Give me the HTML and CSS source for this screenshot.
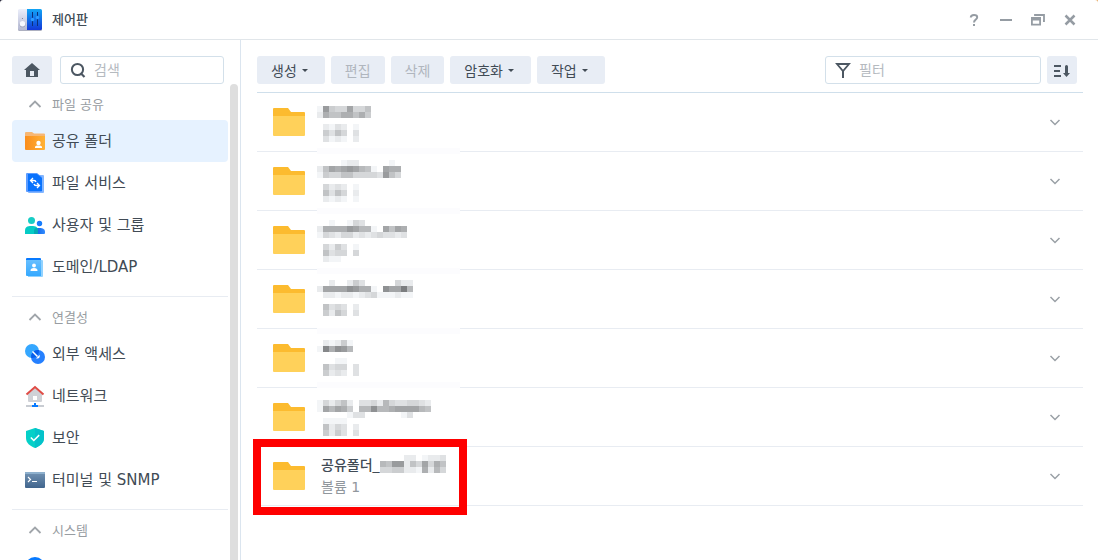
FILE: index.html
```html
<!DOCTYPE html>
<html lang="ko">
<head>
<meta charset="utf-8">
<meta name="viewport" content="width=device-width, initial-scale=1">
<title>제어판</title>
<link rel="stylesheet" href="styles.css">
</head>
<body>
<div class="window">
  <header class="titlebar">
    <svg class="app-icon" width="24" height="22" viewBox="0 0 24 22" aria-hidden="true">
      <defs>
        <linearGradient id="appBlue" x1="0" y1="0" x2="0" y2="1"><stop offset="0" stop-color="#12a5f5"/><stop offset="1" stop-color="#1238d8"/></linearGradient>
        <linearGradient id="appGray" x1="0" y1="0" x2="0" y2="1"><stop offset="0" stop-color="#eceffb"/><stop offset="1" stop-color="#b4b8d2"/></linearGradient>
      </defs>
      <rect y="1" width="24" height="21" rx="1.5" fill="#777b96" opacity=".6"/>
      <path d="M1.500 0H9v21H1.500A1.500 1.500 0 0 1 0 19.500V1.500A1.500 1.500 0 0 1 1.500 0Z" fill="url(#appGray)"/>
      <path d="M9 0h13.500A1.500 1.500 0 0 1 24 1.500v18a1.500 1.500 0 0 1-1.500 1.500H9Z" fill="url(#appBlue)"/>
      <circle cx="4.500" cy="15.500" r="3" fill="#9fa3bd"/><circle cx="4.500" cy="14.800" r="2.700" fill="#f7f8ff"/><circle cx="4.500" cy="9.500" r=".6" fill="#777b96"/>
      <path d="M14.500 3v14M19.500 3v14" stroke="#0b2f79" stroke-width="1"/>
      <circle cx="14.500" cy="10.500" r="1.700" fill="#2c9bff"/><circle cx="19.500" cy="8.500" r="1.700" fill="#2c9bff"/>
    </svg>
    <h1 class="title">제어판</h1>
    <div class="window-controls">
      <button class="control" aria-label="도움말"><svg width="16" height="16" viewBox="0 0 16 16"><path d="M4.800 5.500C4.800 3.500 6 3 8 3S11.200 3.700 11.200 5.200C11.200 7.500 8 7.400 8 10.500" fill="none" stroke="currentColor" stroke-width="2"/><rect x="7" y="12" width="2" height="2" fill="currentColor"/></svg></button>
      <button class="control" aria-label="최소화"><svg width="16" height="16" viewBox="0 0 16 16"><path d="M2 8h12" stroke="currentColor" stroke-width="2"/></svg></button>
      <button class="control" aria-label="이전 크기로"><svg width="16" height="16" viewBox="0 0 16 16"><path d="M5 4V3h9v6h-1" fill="none" stroke="currentColor" stroke-width="1.800"/><path fill-rule="evenodd" d="M1 5h10v8.500H1ZM2.800 8.500v3.200h6.400V8.500Z" fill="currentColor"/></svg></button>
      <button class="control" aria-label="닫기"><svg width="16" height="16" viewBox="0 0 16 16"><path d="M3.500 3.500l9 9M12.500 3.500l-9 9" stroke="currentColor" stroke-width="2.500"/></svg></button>
    </div>
  </header>

  <div class="body">
    <aside class="sidebar">
      <div class="sidebar-top">
        <button class="button home" aria-label="홈"><svg width="16" height="16" viewBox="0 0 16 16"><path fill-rule="evenodd" d="M8 1l8 7h-2v7H2V8H0ZM6 9v5h4V9Z" fill="#4c5762"/></svg></button>
        <label class="field">
          <svg width="16" height="16" viewBox="0 0 16 16" aria-hidden="true"><circle cx="7.500" cy="7.500" r="5.600" fill="none" stroke="#4c5762" stroke-width="2"/><path d="M10.500 11l4 4" stroke="#4c5762" stroke-width="2.200"/></svg>
          <input type="search" placeholder="검색" aria-label="검색">
        </label>
      </div>
      <div class="nav-area">
      <nav class="nav">
        <section class="group">
          <button class="group-title"><svg width="20" height="12" viewBox="0 0 20 12"><path d="M4.500 9L10 3.500 15.500 9" fill="none" stroke="#a0a5aa" stroke-width="1.800"/></svg><span class="label">파일 공유</span></button>
          <a class="item selected" href="#share" aria-current="page"><svg width="20" height="20" viewBox="0 0 20 20"><defs><linearGradient id="orange"><stop stop-color="#fa8d1d"/><stop offset="1" stop-color="#ffb236"/></linearGradient></defs><path d="M0 5V2a1 1 0 0 1 1-1h6l2 1.500h10a1 1 0 0 1 1 1V6H0Z" fill="#f7b774"/><path d="M0 5h20v13a1 1 0 0 1-1 1H1a1 1 0 0 1-1-1Z" fill="url(#orange)"/><circle cx="13.500" cy="12" r="2.200" fill="#fff"/><path d="M10 17v-.7C10 14.500 12 14.500 13.500 14.500S17 14.500 17 16.300V17Z" fill="#fff"/></svg><span class="label">공유 폴더</span></a>
          <a class="item" href="#file"><svg width="20" height="20" viewBox="0 0 20 20"><path d="M3 2h15a1 1 0 0 1 1 1v16a1 1 0 0 1-1 1H4a1 1 0 0 1-1-1Z" fill="#83b6ff"/><path d="M2 0h10l5 4v14a1 1 0 0 1-1 1H2a1 1 0 0 1-1-1V1a1 1 0 0 1 1-1Z" fill="#5c9cff"/><path d="M3 1h9l5 4v13H3Z" fill="#0872fd"/><path d="M8 5L5.500 7.500 8 10M5.500 7.500H9c1.200 0 1.800.7 2 1.500M12 10l2.500 2.500L12 15M14.500 12.500H11c-1.200 0-1.800-.7-2-1.500" fill="none" stroke="#fff" stroke-width="1.300"/></svg><span class="label">파일 서비스</span></a>
          <a class="item" href="#user"><svg width="20" height="20" viewBox="0 0 20 20"><defs><linearGradient id="userBlue"><stop stop-color="#075be0"/><stop offset="1" stop-color="#338cff"/></linearGradient></defs><circle cx="14.500" cy="8.500" r="2.700" fill="#187dfd"/><path d="M9 19v-3c0-2.500 2-3 5.500-3s5.500 1 5.500 4v1a1 1 0 0 1-1 1Z" fill="url(#userBlue)"/><circle cx="6.500" cy="5.500" r="3.500" fill="#18cdc5"/><path d="M0 19v-3c0-4 2-5 6.500-5S13 12 13 16v3Z" fill="#05cbc5"/><path d="M9 19v-3c0-2 1-2.800 3-3 .8.800 1 1.700 1 3v3Z" fill="#04aab5"/></svg><span class="label">사용자 및 그룹</span></a>
          <a class="item" href="#domain"><svg width="20" height="20" viewBox="0 0 20 20"><defs><linearGradient id="bookBlue" x2="0" y2="1"><stop stop-color="#67bfff"/><stop offset="1" stop-color="#35a9ff"/></linearGradient></defs><path d="M2 1h13a1 1 0 0 1 1 1v2H1V2a1 1 0 0 1 1-1Z" fill="#087aff"/><path d="M3 3h14a1 1 0 0 1 1 1v15a1 1 0 0 1-1 1H3Z" fill="#91d2ff"/><path d="M1 3h15v16H2a1 1 0 0 1-1-1Z" fill="url(#bookBlue)"/><circle cx="9" cy="8.500" r="1.900" fill="#fff"/><path d="M5.500 14c0-2.300 1-3 3.500-3s3.500.7 3.500 3Z" fill="#fff"/></svg><span class="label">도메인/LDAP</span></a>
        </section>
        <section class="group">
          <button class="group-title"><svg width="20" height="12" viewBox="0 0 20 12"><path d="M4.500 9L10 3.500 15.500 9" fill="none" stroke="#a0a5aa" stroke-width="1.800"/></svg><span class="label">연결성</span></button>
          <a class="item" href="#external"><svg width="20" height="20" viewBox="0 0 20 20"><circle cx="7" cy="7" r="7" fill="#35a7ff"/><circle cx="13" cy="13" r="7" fill="#2580ff"/><path d="M6.200 11A7 7 0 0 1 14 6.100 7 7 0 0 1 6.200 14Z" fill="#075eea"/><path d="M7.500 7.500l5 5" stroke="#fff" stroke-width="1.500"/><path d="M11 14.500l3.700-3.700v1.700a2.200 2.200 0 0 1-2 2Z" fill="#fff"/></svg><span class="label">외부 액세스</span></a>
          <a class="item" href="#network"><svg width="20" height="22" viewBox="0 0 20 22"><path fill-rule="evenodd" d="M3 9l7-6 7 6v7a1 1 0 0 1-1 1H4a1 1 0 0 1-1-1ZM8 11v4h4v-4Z" fill="#cfd1d6"/><path d="M1.500 9.500L10 2l8.500 7.500" fill="none" stroke="#df4b45" stroke-width="2"/><path d="M1 20h18v2H1Z" fill="#c8ccd2"/><path d="M9 18h2v2h2v2H7v-2h2Z" fill="#087aff"/></svg><span class="label">네트워크</span></a>
          <a class="item" href="#security"><svg width="20" height="20" viewBox="0 0 20 20"><path d="M10 0l9 3v7c0 5-4 8-9 10-5-2-9-5-9-10V3Z" fill="#05d0c8"/><path d="M10 0l9 3v7c0 5-4 8-9 10Z" fill="#04c2ca"/><path d="M5.800 9.500l3 3 5.400-5.400" fill="none" stroke="#fff" stroke-width="1.500"/></svg><span class="label">보안</span></a>
          <a class="item" href="#terminal"><svg width="20" height="20" viewBox="0 0 20 20"><defs><linearGradient id="term" x2="0" y2="1"><stop stop-color="#7393b3"/><stop offset="1" stop-color="#41658d"/></linearGradient></defs><rect y="2" width="20" height="16" rx="1" fill="url(#term)"/><path d="M1 2h18a1 1 0 0 1 1 1v1H0V3a1 1 0 0 1 1-1Z" fill="#8eb0cd"/><path d="M3 7l2.500 2.500L3 12M7 11.500h5" fill="none" stroke="#fff" stroke-width="1.200"/></svg><span class="label">터미널 및 SNMP</span></a>
        </section>
        <section class="group">
          <button class="group-title"><svg width="20" height="12" viewBox="0 0 20 12"><path d="M4.500 9L10 3.500 15.500 9" fill="none" stroke="#a0a5aa" stroke-width="1.800"/></svg><span class="label">시스템</span></button>
          <a class="item" href="#system"><svg width="20" height="20" viewBox="0 0 20 20"><circle cx="10" cy="10" r="10" fill="#087aff"/></svg></a>
        </section>
      </nav>
      <div class="scrollbar"></div>
      </div>
    </aside>

    <main class="content">
      <div class="toolbar">
        <button class="button">생성<span class="caret"></span></button>
        <button class="button" disabled>편집</button>
        <button class="button" disabled>삭제</button>
        <button class="button">암호화<span class="caret"></span></button>
        <button class="button">작업<span class="caret"></span></button>
        <label class="field filter">
          <svg width="16" height="16" viewBox="0 0 16 16" aria-hidden="true"><path d="M2 2h12L8 9Z" fill="none" stroke="#4c5762" stroke-width="1.800"/><path d="M8 8v8" stroke="#4c5762" stroke-width="2"/></svg>
          <input type="search" placeholder="필터" aria-label="필터">
        </label>
        <button class="button sort" aria-label="정렬"><svg width="16" height="14" viewBox="0 0 16 14"><path d="M0 3h7M0 8h6M0 13h7" stroke="#4c5762" stroke-width="2"/><path d="M11 3.500a1.500 1.500 0 0 1 3 0V10h2l-3.500 4L9 10h2Z" fill="#4c5762"/></svg></button>
      </div>

      <svg class="symbols" width="0" height="0" aria-hidden="true">
        <symbol id="folder" viewBox="0 0 32 28"><path d="M0 9V1a1 1 0 0 1 1-1h14l3 4h13a1 1 0 0 1 1 1v4Z" fill="#fcbb2f"/><path d="M0 8h32v19a1 1 0 0 1-1 1H1a1 1 0 0 1-1-1Z" fill="#ffd15a"/></symbol>
        <symbol id="chevron" viewBox="0 0 12 8"><path d="M1.500 2L6 6.500 10.500 2" fill="none" stroke="#9aa0a6" stroke-width="1.500"/></symbol>
      </svg>

      <ul class="list">
        <li class="row"><svg class="folder"><use href="#folder"/></svg><svg class="mosaic" data-strip="55" data-cells="13:1a5449446 19:286688685 31:0213201 37:0536403 43:0312102"></svg><button class="expand" aria-label="펼치기"><svg width="12" height="8"><use href="#chevron"/></svg></button></li>
        <li class="row"><svg class="folder"><use href="#folder"/></svg><svg class="mosaic" data-strip="56" data-cells="8:0000122000001 14:26989a97610988 20:15446644443a64 32:0423201 38:0636402 44:0212101"></svg><button class="expand" aria-label="펼치기"><svg width="12" height="8"><use href="#chevron"/></svg></button></li>
        <li class="row"><svg class="folder"><use href="#folder"/></svg><svg class="mosaic" data-strip="57" data-cells="9:00100143 15:28888a977109698 21:143244232343323 33:0425301 39:0634404 45:0211000"></svg><button class="expand" aria-label="펼치기"><svg width="12" height="8"><use href="#chevron"/></svg></button></li>
        <li class="row"><svg class="folder"><use href="#folder"/></svg><svg class="mosaic" data-strip="58" data-cells="10:0020025300000422 16:29999ba8810b99d7 22:0221221234111211 34:0634302 40:0526403"></svg><button class="expand" aria-label="펼치기"><svg width="12" height="8"><use href="#chevron"/></svg></button></li>
        <li class="row"><svg class="folder"><use href="#folder"/></svg><svg class="mosaic" data-strip="53" data-cells="11:021251 17:1c8ba7 29:0001100 35:0634403 41:0523203"></svg><button class="expand" aria-label="펼치기"><svg width="12" height="8"><use href="#chevron"/></svg></button></li>
        <li class="row"><svg class="folder"><use href="#folder"/></svg><svg class="mosaic" data-cells="12:1424620334274334432 18:197985077b778999976 24:0000013300000013 30:0111100 36:0624302 42:0525303"></svg><button class="expand" aria-label="펼치기"><svg width="12" height="8"><use href="#chevron"/></svg></button></li>
        <li class="row"><svg class="folder"><use href="#folder"/></svg>
          <div class="info">
            <div class="name">공유폴더_<svg class="mosaic-inline" width="66" height="18" data-cells="0:00002201223 6:76aa2649486 12:44552218274"></svg></div>
            <div class="volume">볼륨 1</div>
          </div>
          <button class="expand" aria-label="펼치기"><svg width="12" height="8"><use href="#chevron"/></svg></button>
          <span class="highlight"></span>
        </li>
      </ul>
    </main>
  </div>
</div>
<script src="mosaic.js"></script>
</body>
</html>
```

FILE: styles.css
```css
* { box-sizing: border-box; }

body {
  margin: 0;
  background: linear-gradient(90deg, #1c1c30 50%, #e8b070 50%);
  font-family: "DejaVu Sans", "Noto Sans CJK KR", sans-serif;
  font-size: 14px;
  color: #414b55;
}

button, input { font: inherit; color: inherit; }

button {
  border: 0;
  padding: 0;
  background: none;
  cursor: pointer;
}

svg { flex: none; display: block; }
.symbols { position: absolute; }

.window {
  display: flex;
  flex-direction: column;
  height: 100vh;
  overflow: hidden;
  background: #fff;
  border-radius: 3px 3px 0 0;
}

.titlebar {
  flex: none;
  display: flex;
  align-items: center;
  gap: 10px;
  height: 40px;
  padding: 0 20px 0 18px;
  border-bottom: 1px solid #e1e6ea;
}

.title {
  margin: 0;
  padding-bottom: 2px;
  font-size: 13px;
  font-weight: 500;
}

.window-controls {
  display: flex;
  gap: 16px;
  margin-left: auto;
  color: #959ca3;
}

.body {
  flex: 1;
  display: flex;
  min-height: 0;
}

.sidebar {
  flex: none;
  display: flex;
  flex-direction: column;
  width: 241px;
  border-right: 1px solid #dbe5ef;
}

.sidebar-top {
  display: flex;
  gap: 8px;
  padding: 16px 16px 0 12px;
}

.button {
  display: flex;
  align-items: center;
  justify-content: center;
  height: 28px;
  padding: 0 14px;
  border-radius: 3px;
  background: #e8edf5;
}

.button:disabled { color: #b0b6be; }
.home { width: 40px; padding: 0; }
.sort { width: 30px; padding: 0; }

.caret {
  margin: 0 3px 0 5px;
  border: 3px solid transparent;
  border-top-color: #414b55;
  border-bottom: 0;
}

.field {
  flex: 1;
  display: flex;
  align-items: center;
  gap: 8px;
  min-width: 0;
  height: 28px;
  padding: 0 9px;
  border: 1px solid #d3e0ea;
  border-radius: 3px;
}

.field input {
  flex: 1;
  min-width: 0;
  padding: 0;
  border: 0;
  outline: 0;
  background: none;
}

.field input::placeholder { color: #b5babf; opacity: 1; }

.nav-area {
  flex: 1;
  display: flex;
  gap: 2px;
  min-height: 0;
  padding: 0 2px 0 12px;
}

.nav {
  flex: 1;
  overflow: hidden;
}

.scrollbar {
  width: 8px;
  border-radius: 4px 4px 0 0;
  background: #dedede;
}

.group { padding: 4px 0 8px; }
.group + .group { border-top: 1px solid #e8ecf2; }

.group-title {
  display: flex;
  align-items: center;
  gap: 7px;
  width: 100%;
  height: 32px;
  padding-left: 13px;
  font-size: 13px;
  color: #989da2;
}

.item {
  display: flex;
  align-items: center;
  gap: 7px;
  height: 42px;
  padding-left: 13px;
  border-radius: 4px;
  font-size: 15px;
  color: inherit;
  text-decoration: none;
}

.group-title .label { padding-bottom: 2px; }
.item .label { padding-bottom: 4px; }

.selected { background: #e6f2ff; }

.content {
  flex: 1;
  min-width: 0;
  padding: 16px 15px 0 16px;
}

.toolbar {
  display: flex;
  gap: 6px;
  padding: 0 6px 8px 0;
  border-bottom: 1px solid #cfdfeb;
}

.filter {
  flex: 0 1 216px;
  margin-left: auto;
}

.list {
  margin: 0;
  padding: 0;
  list-style: none;
}

.row {
  position: relative;
  display: flex;
  align-items: center;
  gap: 12px;
  height: 59px;
  padding: 0 22px 0 16px;
  border-bottom: 1px solid #e8ecf2;
}

.folder { width: 32px; height: 28px; }

.mosaic {
  align-self: flex-start;
  width: 144px;
  height: 58px;
  overflow: visible;
}

.expand {
  margin-left: auto;
}

.info { padding: 0 0 2px 4px; }

.name, .volume {
  display: flex;
  align-items: center;
  height: 22px;
}

.name { font-weight: 500; }
.volume { color: #91979d; }

.highlight {
  position: absolute;
  top: -8px;
  left: -4px;
  width: 214px;
  height: 76px;
  border: 8px solid #fe0000;
  pointer-events: none;
}
```

FILE: mosaic.js
```js
// Each band is "top:shades"; a shade is one hex digit per 6px cell, 0 being white.
const CELL = 6;

function addRect(svg, x, y, width, fill) {
  const rect = document.createElementNS("http://www.w3.org/2000/svg", "rect");
  rect.setAttribute("x", x);
  rect.setAttribute("y", y);
  rect.setAttribute("width", width);
  rect.setAttribute("height", CELL);
  rect.setAttribute("fill", fill);
  svg.append(rect);
}

for (const svg of document.querySelectorAll("[data-cells]")) {
  if (svg.dataset.strip) addRect(svg, 0, svg.dataset.strip, 143, "#fcfcfe");
  for (const band of svg.dataset.cells.split(" ")) {
    const [top, shades] = band.split(":");
    [...shades].forEach((digit, column) => {
      const level = parseInt(digit, 16);
      if (!level) return;
      const value = 255 - level * 10;
      addRect(svg, column * CELL, top, CELL, `rgb(${value - 2}, ${value}, ${value + 2})`);
    });
  }
}
```
